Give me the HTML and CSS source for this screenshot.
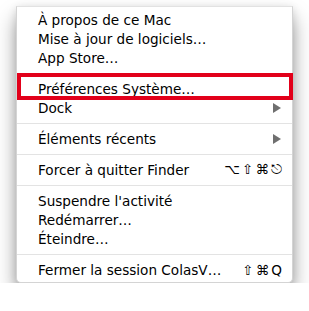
FILE: index.html
```html
<!DOCTYPE html>
<html lang="fr">
<head>
<meta charset="utf-8">
<link rel="stylesheet" href="styles.css">
</head>
<body>
<div class="menu">
  <div class="item">À propos de ce Mac</div>
  <div class="item">Mise à jour de logiciels…</div>
  <div class="item">App Store…</div>
  <div class="sep"></div>
  <div class="item highlight">Préférences Système…</div>
  <div class="item">Dock<span class="arrow"></span></div>
  <div class="sep"></div>
  <div class="item">Éléments récents<span class="arrow"></span></div>
  <div class="sep"></div>
  <div class="item">Forcer à quitter Finder<span class="key">⌥⇧⌘⎋</span></div>
  <div class="sep"></div>
  <div class="item">Suspendre l'activité</div>
  <div class="item">Redémarrer…</div>
  <div class="item">Éteindre…</div>
  <div class="sep"></div>
  <div class="item">Fermer la session ColasV…<span class="key">⇧⌘Q</span></div>
</div>
</body>
</html>
```

FILE: styles.css
```css
html, body {
  margin: 0;
  padding: 0;
  background: #ffffff;
}
body {
  padding: 6px 0 0 16px;
  font-family: "DejaVu Sans", Verdana, sans-serif;
  font-size: 13.6px;
  color: #000;
}
.menu {
  width: 275px;
  background: #fff;
  border: 1px solid #d4d4d4;
  border-top-color: #e2e2e2;
  border-radius: 0 0 5px 5px;
  padding: 3px 0;
  box-shadow: 0 12px 20px rgba(0,0,0,0.38), 0 2px 8px rgba(0,0,0,0.12);
}
.item {
  position: relative;
  display: flex;
  align-items: center;
  justify-content: space-between;
  height: 19px;
  padding: 0 10px 0 21px;
  white-space: nowrap;
}
.sep {
  height: 12px;
  display: flex;
  align-items: center;
}
.sep::before {
  content: "";
  display: block;
  width: 100%;
  height: 1px;
  background: #e3e3e3;
}
.arrow {
  width: 0;
  height: 0;
  border-top: 5px solid transparent;
  border-bottom: 5px solid transparent;
  border-left: 8px solid #6f6f6f;
  margin-right: 1px;
}
.key {
  letter-spacing: 2px;
  margin-right: -2px;
}
.highlight::after {
  content: "";
  position: absolute;
  left: 0;
  top: -6px;
  right: -1px;
  height: 19px;
  border: 4px solid #e2001a;
}
```
